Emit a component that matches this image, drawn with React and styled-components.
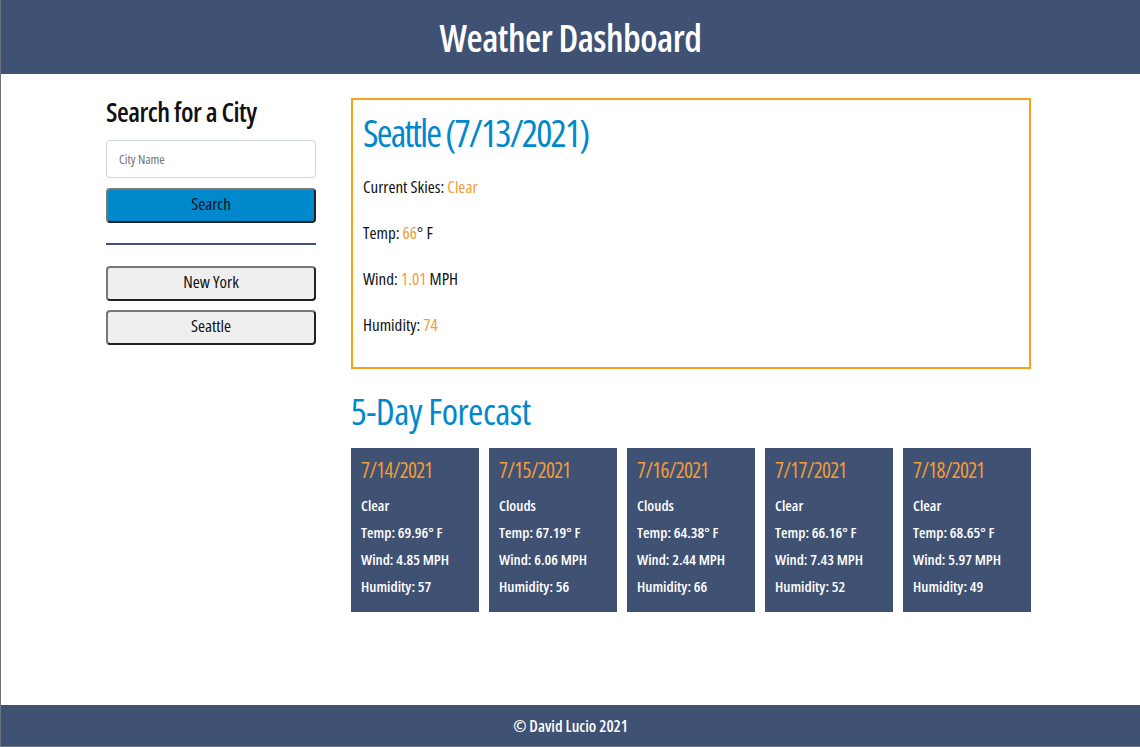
import React from "react";
import styled, { createGlobalStyle } from "styled-components";

const GlobalStyle = createGlobalStyle`
  html, body {
    margin: 0;
    padding: 0;
  }
  body {
    font-family: "Open Sans", "Roboto", sans-serif;
    font-stretch: 75%;
    color: #111;
  }
`;

const Page = styled.div`
  min-height: 100vh;
  display: flex;
  flex-direction: column;
  border-left: 1px solid #6b7385;
  border-bottom: 1px solid #6f7789;
  box-sizing: border-box;
`;

const Header = styled.header`
  background: #405274;
  height: 74px;
  display: flex;
  align-items: center;
  justify-content: center;
`;

const Title = styled.h1`
  margin: 0;
  color: #fff;
  font-size: 37px;
  font-weight: 600;
  letter-spacing: -0.5px;
`;

const Content = styled.main`
  flex: 1;
  width: 925px;
  margin: 0 auto;
  padding: 24px 4px 0 0;
  display: flex;
  gap: 35px;
`;

const Sidebar = styled.aside`
  width: 210px;
  display: flex;
  flex-direction: column;
`;

const SideTitle = styled.h2`
  margin: 0 0 14px;
  font-size: 27px;
  font-weight: 600;
  line-height: 28px;
  letter-spacing: -0.5px;
  white-space: nowrap;
`;

const Input = styled.input`
  height: 38px;
  box-sizing: border-box;
  border: 1px solid #cfd4da;
  border-radius: 4px;
  padding: 0 12px;
  font-family: inherit;
  font-stretch: 75%;
  font-size: 13px;
  margin-bottom: 10px;
  &::placeholder {
    color: #6c757d;
  }
`;

const Button = styled.button`
  height: 35px;
  box-sizing: border-box;
  border: 2px solid;
  border-color: #777 #222 #222 #777;
  border-radius: 4px;
  padding: 0 0 5px;
  background: ${(p) => (p.$primary ? "#0088cc" : "#efefef")};
  font-family: inherit;
  font-stretch: 75%;
  font-size: 17px;
  color: #111;
  margin-bottom: ${(p) => (p.$last ? 0 : 9)}px;
  cursor: pointer;
`;

const Divider = styled.hr`
  width: 100%;
  margin: 20px 0 21px;
  border: none;
  border-top: 2px solid #405274;
`;

const Main = styled.section`
  flex: 0 0 680px;
  display: flex;
  flex-direction: column;
`;

const Current = styled.div`
  border: 2px solid #f7a21b;
  padding: 8px 10px 10px;
  height: 271px;
  box-sizing: border-box;
`;

const CityTitle = styled.h2`
  margin: 0 0 19px;
  color: #0088cc;
  font-size: 38px;
  font-weight: 400;
  line-height: 48px;
  letter-spacing: -1.8px;
`;

const Stat = styled.p`
  margin: 0 0 22px;
  font-size: 17px;
  line-height: 24px;
`;

const Value = styled.span`
  color: #f39c34;
`;

const ForecastTitle = styled.h2`
  margin: 20px 0 15px;
  color: #0088cc;
  font-size: 37px;
  font-weight: 500;
  line-height: 44px;
  letter-spacing: -0.5px;
`;

const Cards = styled.div`
  display: flex;
  gap: 10px;
`;

const Card = styled.div`
  width: 128px;
  height: 164px;
  box-sizing: border-box;
  background: #405274;
  padding: 8px 10px;
  color: #fff;
`;

const CardDate = styled.h3`
  margin: 0 0 8px;
  color: #f39c34;
  font-size: 21px;
  font-weight: 500;
  line-height: 28px;
  letter-spacing: -0.7px;
`;

const CardLine = styled.p`
  margin: 0;
  font-size: 15px;
  font-weight: 600;
  line-height: 27px;
  white-space: nowrap;
`;

const Footer = styled.footer`
  background: #405274;
  height: 41px;
  display: flex;
  align-items: center;
  justify-content: center;
  color: #fff;
  font-size: 16px;
  font-weight: 600;
`;

const forecast = [
  { date: "7/14/2021", sky: "Clear", temp: "69.96", wind: "4.85", hum: 57 },
  { date: "7/15/2021", sky: "Clouds", temp: "67.19", wind: "6.06", hum: 56 },
  { date: "7/16/2021", sky: "Clouds", temp: "64.38", wind: "2.44", hum: 66 },
  { date: "7/17/2021", sky: "Clear", temp: "66.16", wind: "7.43", hum: 52 },
  { date: "7/18/2021", sky: "Clear", temp: "68.65", wind: "5.97", hum: 49 },
];

const App = () => {
  return (
    <Page>
      <GlobalStyle />
      <Header>
        <Title>Weather Dashboard</Title>
      </Header>
      <Content>
        <Sidebar>
          <SideTitle>Search for a City</SideTitle>
          <Input placeholder="City Name" />
          <Button $primary $last>Search</Button>
          <Divider />
          <Button>New York</Button>
          <Button>Seattle</Button>
        </Sidebar>
        <Main>
          <Current>
            <CityTitle>Seattle (7/13/2021)</CityTitle>
            <Stat>
              Current Skies: <Value>Clear</Value>
            </Stat>
            <Stat>
              Temp: <Value>66</Value>° F
            </Stat>
            <Stat>
              Wind: <Value>1.01</Value> MPH
            </Stat>
            <Stat>
              Humidity: <Value>74</Value>
            </Stat>
          </Current>
          <ForecastTitle>5-Day Forecast</ForecastTitle>
          <Cards>
            {forecast.map((d) => (
              <Card key={d.date}>
                <CardDate>{d.date}</CardDate>
                <CardLine>{d.sky}</CardLine>
                <CardLine>Temp: {d.temp}° F</CardLine>
                <CardLine>Wind: {d.wind} MPH</CardLine>
                <CardLine>Humidity: {d.hum}</CardLine>
              </Card>
            ))}
          </Cards>
        </Main>
      </Content>
      <Footer>© David Lucio 2021</Footer>
    </Page>
  );
};

export default App;
